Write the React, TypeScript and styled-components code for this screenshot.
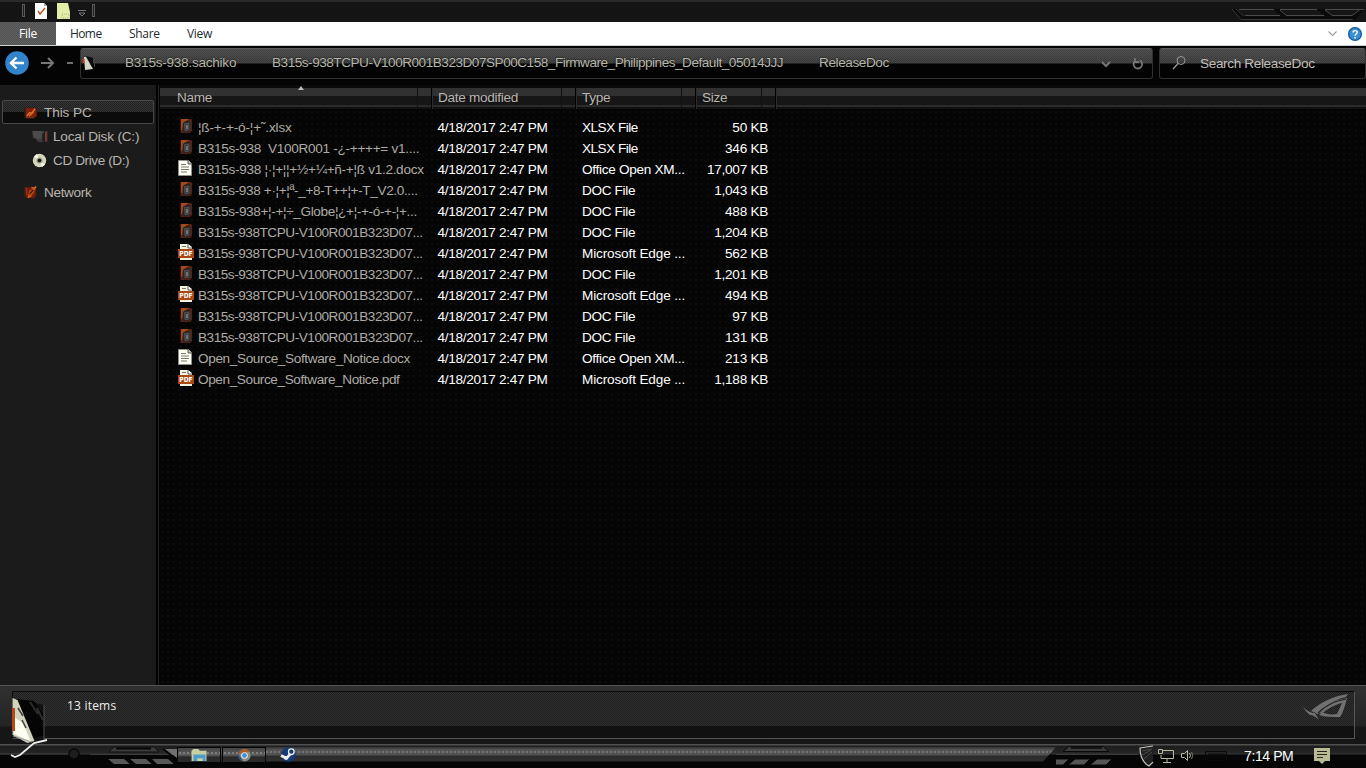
import React from 'react';
import styled, { createGlobalStyle } from 'styled-components';

const Global = createGlobalStyle`
  * { box-sizing: border-box; }
  html, body { margin: 0; padding: 0; background: #050505; overflow: hidden; }
  svg { display: block; flex: none; overflow: visible; }
`;

const arial = `'Liberation Sans', Arial, sans-serif`;
const segoe = `'Open Sans', 'Noto Sans', sans-serif`;

const mesh = (a: string, b: string) =>
  `repeating-conic-gradient(${a} 0% 25%, ${b} 0% 50%) 0 0 / 2px 2px`;

const Window = styled.div`
  width: 1366px; height: 768px; display: flex; flex-direction: column;
  background: #050505; font: 13.6px/16px ${arial}; color: #b8b4ae; overflow: hidden; white-space: pre;
`;

const TitleBar = styled.header`
  height: 22px; flex: none; display: flex; align-items: flex-start; background: #141414;
  border-top: 2px solid #2a2a2a; padding-left: 22px;
`;
const Grip = styled.i`
  width: 3px; height: 13px; margin-top: 2px; border: 1px solid #5a5a5a; background: #1c1c1c;
`;
const QuickIcons = styled.div`
  display: flex; gap: 10px; width: 67px; padding: 1px 0 0 10px;
`;
const TitleDeco = styled.div`margin: 4px 0 0 auto;`;

const Ribbon = styled.nav`
  height: 24px; flex: none; display: flex; background: #fff; border-bottom: 1px solid #c9d3d3;
  font: 12px/24px ${segoe}; letter-spacing: -0.3px; color: #1d2a30;
`;
const FileTab = styled.div`
  width: 56px; text-align: center; color: #fff; background: ${mesh('#505050', '#626262')}; height: 23px;
`;
const Tab = styled.div<{ $w: number; $ls?: number }>`
  width: ${p => p.$w}px; padding-left: 14px; letter-spacing: ${p => p.$ls ?? -0.3}px;
`;
const RibbonEnd = styled.div`margin-left: auto; display: flex; align-items: center; gap: 11px; padding-right: 4px;`;

const NavBar = styled.div`
  height: 39px; flex: none; display: flex; align-items: flex-start; background: #040404; padding-top: 2px;
`;
const NavButtons = styled.div`
  width: 80px; height: 30px; display: flex; align-items: center; padding-left: 4px;
`;
const ForwardSlot = styled.div`margin-left: 12px;`;
const Dash = styled.i`width: 6px; height: 2px; background: #6f6f6f; margin-left: 12px;`;
const glass = `
  height: 31px; border: 1px solid #303030; border-top-color: #5a5a5a; border-radius: 3px;
  background:
    linear-gradient(#4e4e4ecc, #3c3c3c55 14px, transparent 14px),
    linear-gradient(transparent 14px, #030303 15px),
    repeating-conic-gradient(#505050 0% 25%, #303030 0% 50%) 0 0 / 2px 2px;
`;
const Address = styled.div`
  ${glass}
  width: 1073px; display: flex; align-items: center; color: #b5b5a9; padding-left: 1px;
`;
const Crumb = styled.span<{ $w: number; $ls: number }>`
  width: ${p => p.$w}px; letter-spacing: ${p => p.$ls}px; text-shadow: 0 0 2px #000; margin-top: -2px;
`;
const Search = styled.div`
  ${glass}
  width: 207px; margin-left: 6px; display: flex; align-items: center; padding-left: 12px; gap: 13px;
  color: #c0bdb8; letter-spacing: -0.37px;
`;

const Body = styled.main`height: 600px; flex: none; display: flex;`;
const Tree = styled.aside`
  width: 157px; background: #1b1b1b; border-right: 1px solid #000; padding: 15px 2px 0;
`;
const TreeRow = styled.div<{ $in: number; $sel?: boolean; $gap?: number; $ls: number }>`
  height: 24px; display: flex; align-items: center; gap: 6px; padding: 1px 0 0 ${p => p.$in}px;
  margin-top: ${p => p.$gap ?? 0}px; letter-spacing: ${p => p.$ls}px; border: 1px solid transparent; border-radius: 2px;
  ${p => p.$sel && `border-color: #484848;
    background: linear-gradient(transparent 11px, #0b0b0b 11px),
    repeating-conic-gradient(#353535 0% 25%, #202020 0% 50%) 0 0 / 2px 2px;`}
`;
const List = styled.section`
  flex: 1; margin-left: 1px; border-left: 1px solid #222;
  background: radial-gradient(#101010 0.6px, transparent 0.9px) 0 0 / 6px 6px, #050505;
`;
const HeadRow = styled.div`
  height: 24px; display: flex; margin: 0 0 8px 1px; border-top: 3px solid #0a0a0a; letter-spacing: -0.3px;
  background: linear-gradient(#313131 8px, #161616 8px, #161616 17px, #2b2b2b 17px, #2b2b2b 19px, #111 19px);
`;
const HeadCell = styled.div<{ $w: number; $pad: number }>`
  position: relative; width: ${p => p.$w}px; padding: 2px 0 0 ${p => p.$pad}px; border-right: 1px solid #000;
  background: linear-gradient(90deg, transparent calc(100% - 14px), #111 calc(100% - 14px), #111 calc(100% - 13px), transparent calc(100% - 13px));
  box-shadow: 1px 0 #2c2c2c;
`;
const SortMark = styled.i`
  position: absolute; left: 138px; top: -2px; border: 3px solid transparent; border-top: 0; border-bottom: 4px solid #bbb;
`;
const FileRow = styled.div`
  height: 21px; display: grid; grid-template-columns: 18px 241.5px 144.5px 104px 82px; align-items: center; padding-left: 19px;
  color: #fff;
`;
const IconCell = styled.span<{ $in: number }>`padding: 0 0 3px ${p => p.$in}px;`;
const FileName = styled.span<{ $ls: number }>`color: #aeaba6; letter-spacing: ${p => p.$ls}px; padding-left: 2px;`;
const Cell = styled.span<{ $ls: number }>`letter-spacing: ${p => p.$ls}px;`;
const SizeCell = styled(Cell)`text-align: right;`;

const Details = styled.footer`
  height: 59px; flex: none; display: flex; background: linear-gradient(#303030, #242424 40px, #161616 41px);
  border-top: 1px solid #555; padding: 5px 11px 5px 12px;
`;
const DetailsPanel = styled.div`
  flex: 1; display: flex; justify-content: space-between; border: 1px solid #0a0a0a; border-right-color: #555; border-bottom-color: #555;
  background: linear-gradient(transparent 34px, #0c0c0ccc 34px), ${mesh('#1e1e1e', '#303030')};
`;
const ItemCount = styled.span`font: 12px/16px ${segoe}; letter-spacing: 0.2px; color: #eee; padding: 6px 0 0 54px;`;
const LogoBox = styled.div`padding: 0 3px;`;
const Emblem = styled.div`position: absolute; left: 8px; top: 695px;`;

const Taskbar = styled.div`
  height: 24px; flex: none; display: flex; align-items: stretch; background: linear-gradient(#505050 1px, #1c1c1c 2px, #252525 9px, #333 10px, #060606 11px);
`;
const StartArea = styled.div`width: 177px; overflow: hidden;`;
const TaskTrack = styled.div`
  width: 879px; height: 18px; margin-top: 3px; display: flex;
  clip-path: polygon(0 0, 100% 0, calc(100% - 16px) 100%, 0 100%);
  background: radial-gradient(#999 0.6px, transparent 0.8px) 0 3px / 4px 4px repeat-x,
    linear-gradient(#333, #565656 3px, #505050 8px, #2c2c2c 9px, #303030 14px, #050505 15px);
`;
const TaskButton = styled.div`
  width: 44px; height: 16px; display: flex; justify-content: center; margin-right: 1px; border: 1px solid #050505;
  background: radial-gradient(#aaa 0.6px, transparent 0.8px) 0 3px / 4px 4px repeat-x, linear-gradient(#444, #5e5e5e 7px, #2a2a2a 9px);
`;
const SteamSlot = styled.div`margin-left: 13px;`;
const Tray = styled.div`flex: 1; overflow: hidden; display: flex;`;
const Clock = styled.span`width: 71px; color: #fff; font: 14px/16px ${arial}; letter-spacing: -0.4px; padding: 4px 0 0 1px;`;
const TrayIcon = styled.div<{ $w: number; $top?: number }>`width: ${p => p.$w}px; padding-top: ${p => p.$top ?? 3}px;`;

const PcIcon = () => (
  <svg width="15" height="14" viewBox="0 0 16 14">
    <path d="M1 1h14v10l-3 1H3z" fill="#4a170e" /><path d="M1 1l2 1v10H1.500z" fill="#262021" />
    <path d="M3 2h11v9H3z" fill="#801f0b" />
    <path d="M4 10.500l3-4 2 1 4-5M6.500 10.500l5-5" stroke="#e0702a" strokeWidth="1.500" fill="none" />
    <path d="M3 12h9" stroke="#99401c" />
  </svg>
);
const NetIcon = () => (
  <svg width="15" height="15" viewBox="0 0 16 15">
    <path d="M1 2l4-1v10l-4 1z" fill="#33201d" /><path d="M2 2h12v9l-3 3-8-1z" fill="#6d1d0c" />
    <path d="M5 10l2-5 7-3-3 7-5 4z" fill="#b04418" /><path d="M9 2l3 1 2-2" stroke="#d86a2b" strokeWidth="1.600" fill="none" />
    <path d="M7 9l4-4" stroke="#401208" strokeWidth="1.400" /><path d="M4 3v7" stroke="#a33a18" />
    <path d="M5 13l4-2" stroke="#d96624" strokeWidth="1.300" />
  </svg>
);
const DiskIcon = () => (
  <svg width="15" height="14" viewBox="0 0 15 14">
    <path d="M0 1h12v11H6L4 9 1 8z" fill="#3d3d3d" /><path d="M1 2h9M1 4h9M2 6h8M4 8h5" stroke="#626262" strokeWidth=".8" />
    <path d="M13 1h2.500v11H13z" fill="#53282a" /><path d="M14 2v9" stroke="#92503c" /><path d="M10 4l2-1v8l-2 1z" fill="#222" />
  </svg>
);
const CdIcon = () => (
  <svg width="15" height="15" viewBox="0 0 15 15">
    <circle cx="7.5" cy="7.5" r="6.700" fill="#d6d6bb" /><path d="M7.500 7.500L2 3.500 5 1zM7.500 7.500l5.500 4-3 2.600z" fill="#fbfbed" />
    <circle cx="7.5" cy="7.5" r="3" fill="#96968a" /><circle cx="7.5" cy="7.5" r="1.800" fill="#111" />
  </svg>
);
const CaseIcon = () => (
  <svg width="12" height="16" viewBox="0 0 12 16">
    <path d="M.5 1h11v13l-2 1H.5z" fill="#5a1e12" /><path d="M1 1h8L3 5 2 12H1z" fill="#a5481a" />
    <path d="M3 5l3-2h5v10l-6 1.500-2-1z" fill="#232426" /><path d="M4.500 5.500L9 5v7l-4 1z" fill="#3d3f42" stroke="#5c5c5e" strokeWidth=".7" />
    <path d="M6 7h2v4H6z" fill="#707276" /><path d="M11 2v11" stroke="#7d3a22" strokeWidth=".8" />
  </svg>
);
const DocIcon = () => (
  <svg width="14" height="16" viewBox="0 0 14 16">
    <path d="M.5.5h10l3 3v12H.5z" fill="#fffff2" stroke="#90908a" /><path d="M10 0v4h4" fill="#c5c5bd" stroke="#333" strokeWidth=".8" />
    <path d="M3 4.500h5M3 7h8M3 9.500h8M3 12h6" stroke="#77776f" />
  </svg>
);
const PdfLabel = styled.text`font: bold 7px 'DejaVu Sans', sans-serif; fill: #fff;`;
const PdfIcon = () => (
  <svg width="16" height="16" viewBox="0 0 16 16">
    <path d="M2 0h8l4 3v13H2z" fill="#f2f2dd" /><path d="M10 0v4h4" fill="#fff" stroke="#333" strokeWidth=".8" />
    <path d="M4 2.500h4" stroke="#777" /><rect y="5" width="16" height="9" fill="#aa4815" />
    <PdfLabel x="1.3" y="12" textLength="13.400" lengthAdjust="spacingAndGlyphs">PDF</PdfLabel>
  </svg>
);
const TitleLines = () => (
  <svg width="136" height="16" viewBox="0 0 136 16" fill="none">
    <path d="M1 3h133l-9 11H12z" fill="#0a0a0a" />
    <path d="M2 3l9 10.500h112M6 3l8 7" stroke="#383838" />
    <path d="M9 4h35l7 6H15zM50 4h37l8 6H57zM95 4h33l-7 6h-18z" fill="#161616" />
    <path d="M9 3.500h35M15 9.500h35M50 3.500h37M57 9.500h37M95 3.500h39M103 9.500h19l8-6" stroke="#4c4c4c" />
    <path d="M50 4l7 6M95 4l8 6" stroke="#4c4c4c" />
  </svg>
);
const RogLogo = () => (
  <svg width="48" height="32" viewBox="0 0 48 32">
    <g transform="translate(0 1)">
      <path d="M0 14c4 4 8 6 12 6l4 7c-3-3-6-5-9-5-3-2-5-5-7-8z" fill="#707070" />
      <path d="M8 18C18 9 30 3 45 1l-2 3C30 7 22 13 15 21l-2-1z" fill="#707070" />
      <path d="M13 21C20 12 31 7 44 5c-2 8-4 15-7 19-8 0-15 0-21-2l3-3c4 2 9 3 15 2l5-11c-8 2-13 5-18 9z" fill="#707070" />
      <path d="M15 20C23 12 32 8 43 6" stroke="#222" strokeWidth="1.200" fill="none" />
    </g>
  </svg>
);
const StartEmblem = () => (
  <svg width="42" height="66" viewBox="0 0 42 66">
    <path d="M10 4l26 6v35l-12 5z" fill="#111" /><path d="M8 4l18 2 10 14v20L24 44z" fill="#050505" />
    <path d="M22 7l8 12M29 13l6 12" stroke="#2c2c2c" strokeWidth="2" />
    <path d="M36 10v34" stroke="#505050" /><path d="M4.500 3l5 2 17 41-7 2-15-8z" fill="#d2d2be" />
    <path d="M6 22l9 6 8 19-17-8z" fill="#fdfdf0" /><path d="M10 13l5 8M14 25l4 8" stroke="#44443d" strokeWidth="1.600" />
    <path d="M4 13h3v23H4z" fill="#b44817" />
    <path d="M3 60l4 2 5-2 14-12 13-3" stroke="#eee" strokeWidth="1.800" fill="none" />
    <path d="M5 41l19 6" stroke="#999" />
  </svg>
);
const StartDeco = () => (
  <svg width="177" height="24" viewBox="0 0 177 24">
    <path d="M90 10.500h87" stroke="#3c3c3c" /><path d="M0 10h70" stroke="#3c3c3c" />
    <circle cx="74" cy="10" r="5" fill="#1e1e1e" stroke="#080808" strokeWidth="1.500" />
    <path d="M114 3h40l5 5h-50z" fill="#3b3b3b" stroke="#111" /><path d="M116 4.500h35" stroke="#050505" strokeWidth="2" />
    <path d="M107 14.500h17l7 6h-17zM129 14.500h17l7 6h-17zM151 14.500h17l7 6h-18z" fill="#585858" stroke="#080808" />
    <path d="M165 5h12v9z" fill="#707070" /><path d="M163 5l14 11" stroke="#000" strokeWidth="1.500" />
  </svg>
);

type Kind = 'case' | 'doc' | 'pdf';
const icons = { case: CaseIcon, doc: DocIcon, pdf: PdfIcon };
const iconInset = { case: 2, doc: 0, pdf: 0 };
const types = {
  xlsx: { label: 'XLSX File', ls: -0.52 },
  docx: { label: 'Office Open XM...', ls: -0.3 },
  doc: { label: 'DOC File', ls: -0.35 },
  pdf: { label: 'Microsoft Edge ...', ls: -0.15 },
};
const longName = 'B315s-938TCPU-V100R001B323D07...';
const files: [Kind, string, number, keyof typeof types, string][] = [
  ['case', '¦ß-+-+-ó-¦+˜.xlsx', -0.17, 'xlsx', '50'],
  ['case', 'B315s-938  V100R001 -¿-++++= v1....', -0.3, 'xlsx', '346'],
  ['doc', 'B315s-938 ¦·¦+¦¦+½+¼+ñ-+¦ß v1.2.docx', -0.3, 'docx', '17,007'],
  ['case', 'B315s-938 +·¦+¦ª-_+8-T++¦+-T_V2.0....', -0.37, 'doc', '1,043'],
  ['case', 'B315s-938+¦-+¦÷_Globe¦¿+¦-+-ó-+-¦+...', -0.36, 'doc', '488'],
  ['case', longName, -0.47, 'doc', '1,204'],
  ['pdf', longName, -0.47, 'pdf', '562'],
  ['case', longName, -0.47, 'doc', '1,201'],
  ['pdf', longName, -0.47, 'pdf', '494'],
  ['case', longName, -0.47, 'doc', '97'],
  ['case', longName, -0.47, 'doc', '131'],
  ['doc', 'Open_Source_Software_Notice.docx', -0.37, 'docx', '213'],
  ['pdf', 'Open_Source_Software_Notice.pdf', -0.4, 'pdf', '1,188'],
];

export default function App() {
  return (
    <Window>
      <Global />
      <TitleBar>
        <Grip />
        <QuickIcons>
          <svg width="12" height="16" viewBox="0 0 12 16"><path d="M0 0h9l3 3v13H0z" fill="#fff" /><path d="M9 0v3h3" fill="#aaa" /><path d="M3 8l2 3 5-6" stroke="#b65a25" strokeWidth="1.400" fill="none" /></svg>
          <svg width="13" height="16" viewBox="0 0 13 16"><path d="M0 0h11l2 9v7H0z" fill="#e3edaa" /><path d="M5 11h7v4H5z" fill="none" stroke="#aeb782" strokeDasharray="1 1" /></svg>
          <svg width="8" height="16" viewBox="0 0 8 16"><path d="M-2 7.500h8M-1 10l3 3 3-3z" stroke="#777" fill="none" /></svg>
        </QuickIcons>
        <Grip />
        <TitleDeco><TitleLines /></TitleDeco>
      </TitleBar>
      <Ribbon>
        <FileTab>File</FileTab><Tab $w={59} $ls={-0.6}>Home</Tab><Tab $w={58}>Share</Tab><Tab $w={60}>View</Tab>
        <RibbonEnd>
          <svg width="9" height="6" viewBox="0 0 9 6"><path d="M.5.5l4 4 4-4" stroke="#9aa3a3" strokeWidth="1.200" fill="none" /></svg>
          <svg width="14" height="14" viewBox="0 0 14 14"><circle cx="7" cy="7" r="6.400" fill="#3a8fd0" stroke="#155b9d" strokeWidth="1.300" /><path d="M5 5.500C5 3 9.200 3 9.200 5.300 9.200 7 7 7 7 8.800M7 10v1.500" stroke="#fff" strokeWidth="1.400" fill="none" /></svg>
        </RibbonEnd>
      </Ribbon>
      <NavBar>
        <NavButtons>
          <svg width="25" height="26" viewBox="0 0 25 26"><circle cx="13" cy="13" r="11.800" fill="#3183cb" /><path d="M20 13H7M12.500 7.500L7 13l5.500 5.500" stroke="#fff" strokeWidth="2.400" fill="none" /></svg>
          <ForwardSlot><svg width="14" height="14" viewBox="0 0 14 14"><path d="M0 7h12M7 2l5 5-5 5" stroke="#777" strokeWidth="2" fill="none" /></svg></ForwardSlot>
          <Dash />
        </NavButtons>
        <Address>
          <svg width="43" height="18" viewBox="0 0 43 18"><path d="M2 2l2 0 7 12-8 1z" fill="#d5d5c8" /><path d="M4 1l7 12V3z" fill="#0c0c0c" /><path d="M1.500 4v4" stroke="#b64b1b" strokeWidth="2" /><path d="M12.500 5v7" stroke="#444" /></svg>
          <Crumb $w={147} $ls={-0.26}>B315s-938.sachiko</Crumb>
          <Crumb $w={547} $ls={-0.49}>B315s-938TCPU-V100R001B323D07SP00C158_Firmware_Philippines_Default_05014JJJ</Crumb>
          <Crumb $w={281} $ls={-0.42}>ReleaseDoc</Crumb>
          <svg width="45" height="14" viewBox="0 0 45 14" fill="none" stroke="#777" strokeWidth="2"><path d="M2 5l4 4 4-4" /><path d="M35 4a4.300 4.300 0 1 0 5-.5M35 1v4h4" strokeWidth="1.800" /></svg>
        </Address>
        <Search>
          <svg width="15" height="15" viewBox="0 0 15 15" fill="none" stroke="#999"><circle cx="9" cy="4.500" r="4" /><path d="M6 7.500L1 13" strokeWidth="1.300" /></svg>
          Search ReleaseDoc
        </Search>
      </NavBar>
      <Body>
        <Tree>
          <TreeRow $in={20} $sel $ls={-0.1}><PcIcon />This PC</TreeRow>
          <TreeRow $in={29} $ls={-0.19}><DiskIcon />Local Disk (C:)</TreeRow>
          <TreeRow $in={29} $ls={-0.42}><CdIcon />CD Drive (D:)</TreeRow>
          <TreeRow $in={20} $gap={8} $ls={-0.35}><NetIcon />Network</TreeRow>
        </Tree>
        <List>
          <HeadRow>
            <HeadCell $w={272} $pad={17}>Name<SortMark /></HeadCell>
            <HeadCell $w={144} $pad={6}>Date modified</HeadCell>
            <HeadCell $w={120} $pad={6}>Type</HeadCell>
            <HeadCell $w={80} $pad={6}>Size</HeadCell>
          </HeadRow>
          {files.map(([kind, name, ls, type, size], i) => {
            const Icon = icons[kind];
            return (
              <FileRow key={i}>
                <IconCell $in={iconInset[kind]}><Icon /></IconCell>
                <FileName $ls={ls}>{name}</FileName><Cell $ls={-0.28}>4/18/2017 2:47 PM</Cell>
                <Cell $ls={types[type].ls}>{types[type].label}</Cell><SizeCell $ls={-0.28}>{size} KB</SizeCell>
              </FileRow>
            );
          })}
        </List>
      </Body>
      <Details>
        <DetailsPanel><ItemCount>13 items</ItemCount><LogoBox><RogLogo /></LogoBox></DetailsPanel>
      </Details>
      <Taskbar>
        <StartArea><StartDeco /></StartArea>
        <TaskTrack>
          <TaskButton><svg width="17" height="14" viewBox="0 0 17 15"><path d="M0 3l2-2h5l2 2h7v11H0z" fill="#c9cf9e" /><path d="M2 7h13v7h-3v-3H6v3H2z" fill="#4e9ccb" /></svg></TaskButton>
          <TaskButton><svg width="15" height="14" viewBox="0 0 15 15"><circle cx="7.5" cy="8" r="6.500" fill="#8b8c79" /><path d="M1 7a6.500 6.500 0 0 1 12-3L7 5z" fill="#a65c2b" /><path d="M1 6l5 8a6 6 0 0 1-5-8z" fill="#345885" /><circle cx="7.5" cy="8" r="3.500" fill="#eee" /><circle cx="7.5" cy="8" r="2.600" fill="#3c92dc" /></svg></TaskButton>
          <SteamSlot><svg width="17" height="16" viewBox="0 0 18 17"><circle cx="9" cy="8" r="7.800" fill="#153a75" /><path d="M1 9l6 3 5-6" stroke="#eee" strokeWidth="3" fill="none" /><circle cx="12" cy="5" r="3" fill="#153a75" stroke="#eee" strokeWidth="1.400" /><circle cx="6" cy="11.500" r="2" fill="#eee" /></svg></SteamSlot>
        </TaskTrack>
        <Tray>
          <TrayIcon $w={82} $top={0}><svg width="82" height="24" viewBox="0 0 82 24"><path d="M13 2.500h34l6 5H7z" fill="#3b3b3b" stroke="#090909" /><path d="M15 4h31" stroke="#080808" strokeWidth="1.500" /><path d="M-4 10.500h86" stroke="#3c3c3c" /><path d="M-2 15h15l-6 6H-9zM19 15h15l-6 6H12zM41 15h15l-6 6H34z" fill="#555" stroke="#080808" /></svg></TrayIcon>
          <TrayIcon $w={20} $top={0}><svg width="20" height="24" viewBox="0 0 20 24"><path d="M4 3q7 0 10-1l1 1v13l-4 6Q2 17 2 4z" fill="#1f1f1f" /><path d="M15 2Q8 3 2 4q0 13 9 18l4-4" stroke="#c4c4bc" fill="none" strokeWidth="1.200" /><path d="M4 7l10-2M4 11l9-5M6 15l8-7" stroke="#494949" /></svg></TrayIcon>
          <TrayIcon $w={23} $top={5}><svg width="17" height="14" viewBox="0 0 17 14" fill="none" stroke="#b8b9a4"><path d="M5 1.500h10.500v8H3V6M9 10v3M5 13.500h8M.5.5h4v4h-4z" /></svg></TrayIcon>
          <TrayIcon $w={62} $top={5}><svg width="50" height="13" viewBox="0 0 50 13" fill="none" stroke="#b8b9a4"><path d="M.5 4.500h3l3-3v10l-3-3h-3zM8.500 4q2 2.500 0 5" /><path d="M10.500 3q2.500 3.500 0 7" stroke="#77786a" /><path d="M24.500 2.500h21v9h-21zM27 5h17M27 8h17" stroke="#0a0a0a" /></svg></TrayIcon>
          <Clock>7:14 PM</Clock>
          <TrayIcon $w={20} $top={4}><svg width="16" height="16" viewBox="0 0 16 16"><path d="M0 0h16v13h-5l-3 3-3-3H0z" fill="#b9bb92" /><path d="M3 3.500h10M3 6.500h10M3 9.500h6" stroke="#24241e" /></svg></TrayIcon>
        </Tray>
      </Taskbar>
      <Emblem><StartEmblem /></Emblem>
    </Window>
  );
}
